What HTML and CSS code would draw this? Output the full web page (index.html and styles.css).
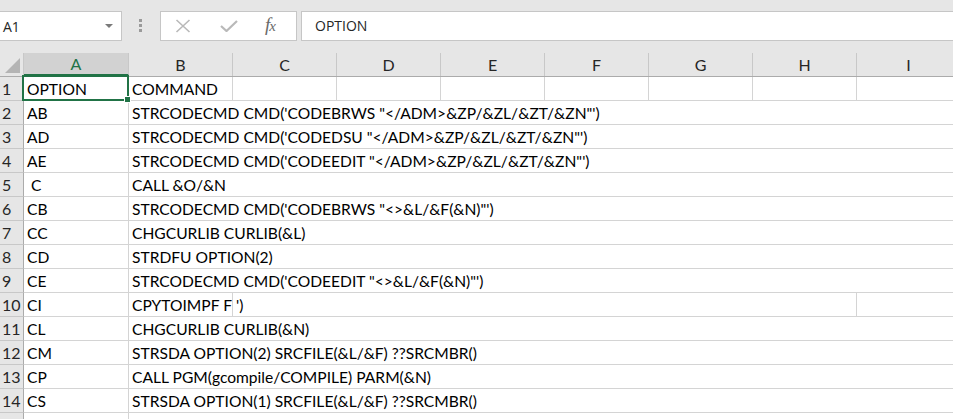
FILE: index.html
```html
<!DOCTYPE html>
<html>
<head>
<meta charset="utf-8">
<link rel="stylesheet" href="styles.css">
</head>
<body>
<div class="app">
  <div class="toolbar">
    <div class="namebox"><span class="nb-text">A1</span><span class="caret"></span></div>
    <div class="grip"></div>
    <div class="fbtns">
      <svg class="ico" width="16" height="14" viewBox="0 0 16 14"><path d="M1.5 1 L14.5 13 M14.5 1 L1.5 13" stroke="#b9b9b9" stroke-width="1.6" fill="none"/></svg>
      <svg class="ico" width="18" height="12" viewBox="0 0 18 12"><path d="M1 6 L6.5 11 L17 1" stroke="#b9b9b9" stroke-width="2.2" fill="none"/></svg>
      <span class="fx">f<i>x</i></span>
    </div>
    <div class="finput">OPTION</div>
  </div>
  <div class="sheet">
    <div class="hrow">
      <div class="corner"><span class="tri"></span></div>
      <div class="ch ca sel-col">A</div><div class="ch">B</div><div class="ch">C</div><div class="ch">D</div><div class="ch">E</div><div class="ch">F</div><div class="ch">G</div><div class="ch">H</div><div class="ch">I</div>
    </div>
    <div class="row">
      <div class="rh">1</div>
      <div class="c ca">OPTION</div><div class="c">COMMAND</div><div class="c"></div><div class="c"></div><div class="c"></div><div class="c"></div><div class="c"></div><div class="c"></div><div class="c"></div>
    </div>
    <div class="row"><div class="rh">2</div><div class="c ca">AB</div><div class="c span">STRCODECMD CMD('CODEBRWS "&lt;/ADM&gt;&amp;ZP/&amp;ZL/&amp;ZT/&amp;ZN"')</div></div>
    <div class="row"><div class="rh">3</div><div class="c ca">AD</div><div class="c span">STRCODECMD CMD('CODEDSU "&lt;/ADM&gt;&amp;ZP/&amp;ZL/&amp;ZT/&amp;ZN"')</div></div>
    <div class="row"><div class="rh">4</div><div class="c ca">AE</div><div class="c span">STRCODECMD CMD('CODEEDIT "&lt;/ADM&gt;&amp;ZP/&amp;ZL/&amp;ZT/&amp;ZN"')</div></div>
    <div class="row"><div class="rh">5</div><div class="c ca">&nbsp;C</div><div class="c span">CALL &amp;O/&amp;N</div></div>
    <div class="row"><div class="rh">6</div><div class="c ca">CB</div><div class="c span">STRCODECMD CMD('CODEBRWS "&lt;&gt;&amp;L/&amp;F(&amp;N)"')</div></div>
    <div class="row"><div class="rh">7</div><div class="c ca">CC</div><div class="c span">CHGCURLIB CURLIB(&amp;L)</div></div>
    <div class="row"><div class="rh">8</div><div class="c ca">CD</div><div class="c span">STRDFU OPTION(2)</div></div>
    <div class="row"><div class="rh">9</div><div class="c ca">CE</div><div class="c span">STRCODECMD CMD('CODEEDIT "&lt;&gt;&amp;L/&amp;F(&amp;N)"')</div></div>
    <div class="row"><div class="rh">10</div><div class="c ca">CI</div><div class="c clip">CPYTOIMPF FILE</div><div class="c c6">')</div><div class="c"></div></div>
    <div class="row"><div class="rh">11</div><div class="c ca">CL</div><div class="c span">CHGCURLIB CURLIB(&amp;N)</div></div>
    <div class="row"><div class="rh">12</div><div class="c ca">CM</div><div class="c span">STRSDA OPTION(2) SRCFILE(&amp;L/&amp;F) ??SRCMBR()</div></div>
    <div class="row"><div class="rh">13</div><div class="c ca">CP</div><div class="c span">CALL PGM(gcompile/COMPILE) PARM(&amp;N)</div></div>
    <div class="row"><div class="rh">14</div><div class="c ca">CS</div><div class="c span">STRSDA OPTION(1) SRCFILE(&amp;L/&amp;F) ??SRCMBR()</div></div>
    <div class="row"><div class="rh"></div><div class="c ca"></div><div class="c span"></div></div>
    <div class="selbox"><span class="handle"></span></div>
  </div>
</div>
</body>
</html>
```
FILE: styles.css
```css
html, body { margin: 0; padding: 0; }
body { width: 953px; height: 419px; overflow: hidden; background: #fff; }
.app { width: 953px; height: 419px; overflow: hidden; font-family: Lato, "Liberation Sans", sans-serif; }

.toolbar { height: 53px; background: #e6e6e6; display: flex; align-items: flex-start; padding-top: 11px; box-sizing: border-box; }
.namebox { width: 122px; height: 30px; box-sizing: border-box; background: #fff; border: 1px solid #c6c6c6; border-left: none; display: flex; align-items: center; justify-content: space-between; padding: 0 8px 0 3px; font-family: "Open Sans", sans-serif; font-size: 14px; color: #262626; }
.caret { width: 0; height: 0; border-left: 4px solid transparent; border-right: 4px solid transparent; border-top: 4px solid #7a7a7a; }
.grip { width: 3px; height: 13px; margin: 8px 0 0 17px; background: repeating-linear-gradient(to bottom, #9a9a9a 0 3px, transparent 3px 5px); }
.fbtns { margin-left: 18px; width: 137px; height: 30px; box-sizing: border-box; background: #fff; border: 1px solid #c6c6c6; display: flex; align-items: center; padding-left: 14px; gap: 0; }
.fbtns .ico:nth-child(1) { margin-right: 29px; }
.fbtns .ico:nth-child(2) { margin-right: 27px; }
.fx { font-family: "Liberation Serif", serif; font-style: italic; font-size: 19px; color: #6a6a6a; line-height: 1; margin-top: -3px; letter-spacing: -1px; }
.fx i { font-size: 15px; }
.finput { margin-left: 4px; flex: 1; height: 30px; box-sizing: border-box; background: #fff; border: 1px solid #c6c6c6; border-right: none; padding-left: 13px; font-family: "Open Sans", sans-serif; font-size: 14px; color: #262626; line-height: 28px; }

.sheet { position: relative; }
.hrow { display: flex; height: 24px; background: #e6e6e6; border-bottom: 1px solid #ababab; box-sizing: border-box; }
.corner { width: 24px; flex: none; position: relative; box-sizing: border-box; border-right: 1px solid #c8c8c8; }
.tri { position: absolute; right: 3px; bottom: 3px; width: 0; height: 0; border-left: 15px solid transparent; border-bottom: 15px solid #b4b4b4; }
.ch { width: 104px; flex: none; box-sizing: border-box; border-right: 1px solid #c8c8c8; text-align: center; font-size: 16px; line-height: 23px; color: #262626; }
.ch.ca { width: 105px; }
.ch.sel-col { background: #d2d2d2; color: #217346; border-bottom: 2px solid #217346; line-height: 22px; }

.row { display: flex; height: 24px; box-sizing: border-box; border-bottom: 1px solid #d4d4d4; }
.rh { width: 24px; flex: none; box-sizing: border-box; background: #e6e6e6; border-right: 1px solid #ababab; border-bottom: 1px solid #c8c8c8; margin-bottom: -1px; font-size: 16px; line-height: 22px; padding-top: 1px; color: #262626; padding-left: 2px; }
.c { width: 104px; flex: none; box-sizing: border-box; border-right: 1px solid #d4d4d4; font-size: 15.6px; line-height: 22px; padding-top: 1px; color: #000; padding-left: 3px; white-space: pre; overflow: hidden; }
.c.ca { width: 105px; }
.c.span { flex: 1; border-right: none; overflow: visible; }
.c.clip { overflow: hidden; }
.c.c6 { width: 624px; }

.selbox { position: absolute; left: 22px; top: 22px; width: 107px; height: 26px; box-sizing: border-box; border: 2px solid #217346; }
.handle { position: absolute; right: -4px; bottom: -4px; width: 5px; height: 5px; background: #217346; border: 1px solid #fff; }
```
